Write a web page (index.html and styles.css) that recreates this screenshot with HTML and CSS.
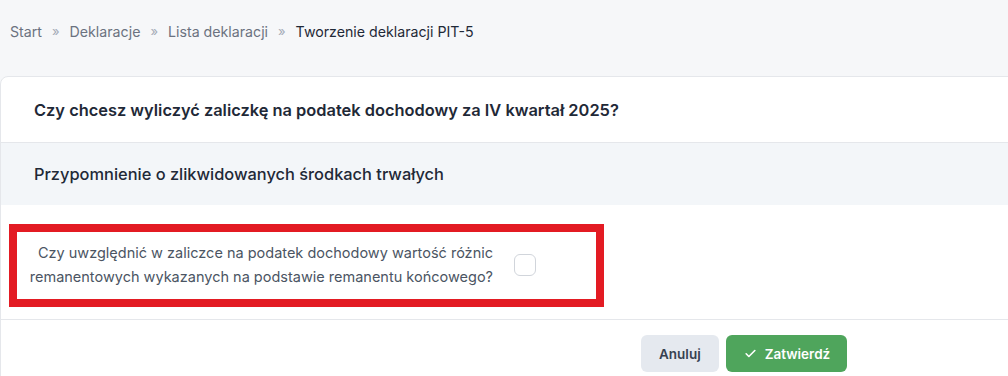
FILE: index.html
```html
<!DOCTYPE html>
<html lang="pl">

<head>
    <meta charset="UTF-8">
    <meta name="viewport" content="width=device-width, initial-scale=1.0">
    <title>Tworzenie deklaracji PIT-5</title>
    <link rel="stylesheet" href="styles.css">
</head>

<body>
    <nav class="breadcrumb">
        <a href="#">Start</a>
        <span class="sep">&raquo;</span>
        <a href="#">Deklaracje</a>
        <span class="sep">&raquo;</span>
        <a href="#">Lista deklaracji</a>
        <span class="sep">&raquo;</span>
        <span class="current">Tworzenie deklaracji PIT-5</span>
    </nav>

    <div class="card">
        <div class="card-header">Czy chcesz wyliczyć zaliczkę na podatek dochodowy za IV kwartał 2025?</div>
        <div class="card-subheader">Przypomnienie o zlikwidowanych środkach trwałych</div>

        <div class="card-body">
            <div class="highlight">
                <div class="form-row">
                    <label for="remanent" class="form-label">Czy uwzględnić w zaliczce na podatek dochodowy wartość różnic remanentowych wykazanych na podstawie remanentu końcowego?</label>
                    <input type="checkbox" id="remanent" class="checkbox">
                </div>
            </div>
        </div>

        <div class="card-footer">
            <button class="btn btn-cancel">Anuluj</button>
            <button class="btn btn-confirm">
                <svg width="13" height="13" viewBox="0 0 24 24" fill="none" stroke="currentColor" stroke-width="3" stroke-linecap="round" stroke-linejoin="round"><path d="M4 12.5l5 5L20 6.5"/></svg>
                Zatwierdź
            </button>
        </div>
    </div>
</body>

</html>
```

FILE: styles.css
```css
html, body {
    margin: 0;
    padding: 0;
    font-family: "Inter", "Noto Sans", sans-serif;
    background: #f6f7f9;
    color: #1f2937;
    overflow: hidden;
}

.breadcrumb {
    display: flex;
    align-items: center;
    gap: 10px;
    height: 62px;
    padding: 0 10px;
    font-size: 14.2px;
}

.breadcrumb a {
    color: #6b7280;
    text-decoration: none;
}

.breadcrumb .sep {
    color: #a3aab6;
    font-size: 13px;
}

.breadcrumb .current {
    color: #1f2937;
}

.card {
    margin: 14px -12px 0 0;
    background: #fff;
    border: 1px solid #e5e7eb;
    border-radius: 8px 0 0 0;
}

.card-header {
    display: flex;
    align-items: center;
    height: 65px;
    padding: 0 33px;
    font-size: 16.4px;
    font-weight: 600;
    color: #1f2937;
    border-bottom: 1px solid #e5e7eb;
}

.card-subheader {
    display: flex;
    align-items: center;
    height: 62px;
    padding: 0 33px;
    font-size: 16.4px;
    font-weight: 500;
    background: #f3f6f9;
    color: #1f2937;
}

.card-body {
    padding: 19px 0 12px 8px;
    border-bottom: 1px solid #e5e7eb;
}

.highlight {
    width: 579px;
    border: 8px solid #e31b23;
}

.form-row {
    display: grid;
    grid-template-columns: 476px 22px;
    gap: 21px;
    align-items: center;
    padding: 9px 0 10px;
}

.form-label {
    text-align: right;
    font-size: 14.5px;
    line-height: 24px;
    color: #4b5563;
}

.checkbox {
    appearance: none;
    margin: 0;
    width: 22px;
    height: 22px;
    border: 1px solid #d1d5db;
    border-radius: 6px;
    background: #fff;
}

.card-footer {
    display: flex;
    gap: 7px;
    padding: 15px 0 20px 640px;
}

.btn {
    display: flex;
    align-items: center;
    gap: 8px;
    height: 37px;
    border: none;
    border-radius: 6px;
    font-family: inherit;
    font-size: 13.5px;
    font-weight: 600;
    cursor: pointer;
}

.btn-cancel {
    padding: 0 18px;
    background: #e5e9ef;
    color: #374151;
}

.btn-confirm {
    padding: 0 17px 0 18px;
    background: #4fa55c;
    color: #fff;
}
```
